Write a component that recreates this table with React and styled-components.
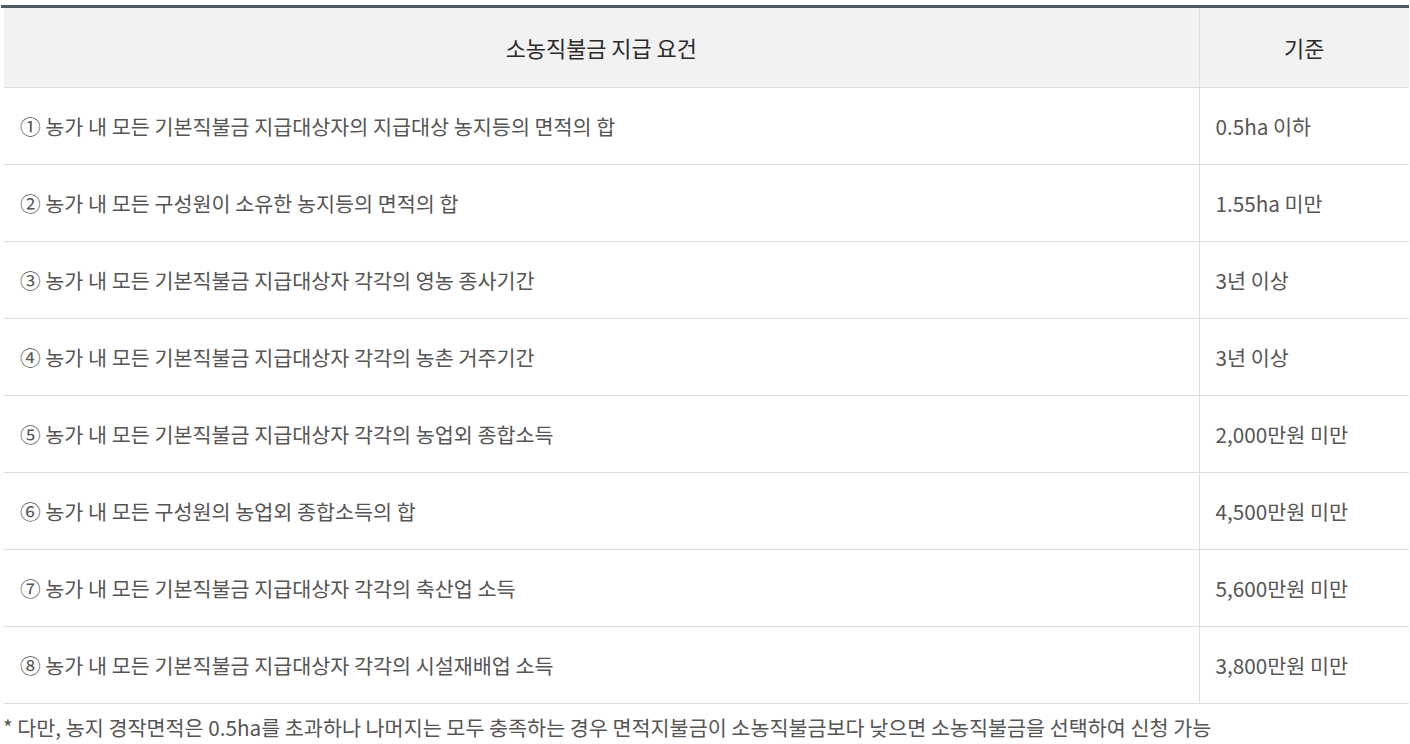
import React from "react";
import styled, { createGlobalStyle } from "styled-components";

const Global = createGlobalStyle`
  html, body { margin: 0; padding: 0; background: #fff; }
  body { font-family: "Noto Sans CJK KR", "Noto Sans", sans-serif; }
`;

const Page = styled.div`
  padding: 5px 0 0 1px;
  width: 1409px;
  box-sizing: border-box;
`;

const TableWrap = styled.div`
  border-top: 3px solid #535865;
  padding-left: 3px;
`;

const Table = styled.table`
  width: 100%;
  border-collapse: collapse;
  table-layout: fixed;
  font-size: 20.7px;
`;

const HeadCell = styled.th`
  height: 79px;
  padding: 0;
  background: #f2f2f2;
  color: #2a2a2a;
  font-size: 21.9px;
  font-weight: 400;
  text-align: center;
  border-bottom: 1px solid #ddd;
  border-left: ${(p) => (p.$divider ? "1px solid #ddd" : "none")};
`;

const Cell = styled.td`
  height: 76px;
  padding: 0 16px;
  color: #555;
  text-align: left;
  border-bottom: 1px solid #ddd;
  border-left: ${(p) => (p.$divider ? "1px solid #ddd" : "none")};
`;

const Note = styled.p`
  margin: 9px 0 0 2px;
  font-size: 20.7px;
  color: #555;
  line-height: 28px;
`;

const rows = [
  ["① 농가 내 모든 기본직불금 지급대상자의 지급대상 농지등의 면적의 합", "0.5ha 이하"],
  ["② 농가 내 모든 구성원이 소유한 농지등의 면적의 합", "1.55ha 미만"],
  ["③ 농가 내 모든 기본직불금 지급대상자 각각의 영농 종사기간", "3년 이상"],
  ["④ 농가 내 모든 기본직불금 지급대상자 각각의 농촌 거주기간", "3년 이상"],
  ["⑤ 농가 내 모든 기본직불금 지급대상자 각각의 농업외 종합소득", "2,000만원 미만"],
  ["⑥ 농가 내 모든 구성원의 농업외 종합소득의 합", "4,500만원 미만"],
  ["⑦ 농가 내 모든 기본직불금 지급대상자 각각의 축산업 소득", "5,600만원 미만"],
  ["⑧ 농가 내 모든 기본직불금 지급대상자 각각의 시설재배업 소득", "3,800만원 미만"],
];

export default function App() {
  return (
    <Page>
      <Global />
      <TableWrap>
        <Table>
          <colgroup>
            <col style={{ width: "1195px" }} />
            <col />
          </colgroup>
          <thead>
            <tr>
              <HeadCell>소농직불금 지급 요건</HeadCell>
              <HeadCell $divider>기준</HeadCell>
            </tr>
          </thead>
          <tbody>
            {rows.map(([a, b]) => (
              <tr key={a}>
                <Cell>{a}</Cell>
                <Cell $divider>{b}</Cell>
              </tr>
            ))}
          </tbody>
        </Table>
      </TableWrap>
      <Note>* 다만, 농지 경작면적은 0.5ha를 초과하나 나머지는 모두 충족하는 경우 면적지불금이 소농직불금보다 낮으면 소농직불금을 선택하여 신청 가능</Note>
    </Page>
  );
}
